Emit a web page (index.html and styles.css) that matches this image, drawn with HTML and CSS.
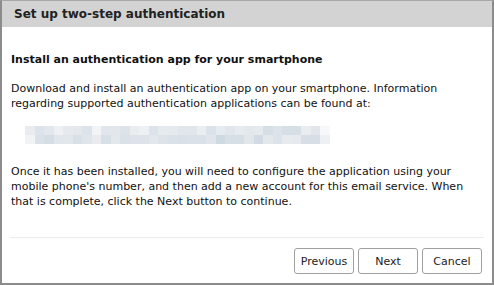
FILE: index.html
```html
<!DOCTYPE html>
<html>
<head>
<meta charset="utf-8">
<link rel="stylesheet" href="styles.css">
</head>
<body>
<div class="dialog">
  <div class="titlebar">Set up two-step authentication</div>
  <div class="content">
    <h2 class="heading">Install an authentication app for your smartphone</h2>
    <p class="para">Download and install an authentication app on your smartphone. Information regarding supported authentication applications can be found at:</p>
    <div class="blur" id="blur"></div>
    <p class="para para-after">Once it has been installed, you will need to configure the application using your mobile phone's number, and then add a new account for this email service. When that is complete, click the Next button to continue.</p>
  </div>
  <div class="footer">
    <button class="btn btn-prev">Previous</button>
    <button class="btn btn-next">Next</button>
    <button class="btn btn-cancel">Cancel</button>
  </div>
</div>
<script>
  var colors = [
    ["#e8ecf0","#dde3ea","#e1e7ed","#eef1f3","#e6eaee","#e4e8ec","#dde3ea","#f3f4f6","#e1e6ec","#e3e7eb","#dde3e9","#e9edf0","#eef1f3","#dde3ea","#e5eaee","#e5eaee","#e1e6eb","#e1e6ec","#ebeef1","#dbe2e9","#e6ebef","#e0e6ec","#e7ebef","#e3e8ec","#e6eaee","#d6dee6","#dde3ea","#d6dee6","#d6dee6","#e9edf0","#e2e6eb","#f6f8f9"],
    ["#f1f3f5","#dbe1e8","#d5dde5","#e1e6ec","#e2e7ec","#d9e0e7","#dfe5ea","#e8ecef","#d7dfe7","#e3e8ed","#dae1e8","#dde3e9","#dde3e9","#e2e7ec","#dde3e9","#dbe1e8","#d9e0e7","#dbe1e8","#dbe1e8","#e0e5eb","#cfd9e2","#d7dfe6","#d7dfe6","#e1e6eb","#d2dbe4","#e3e8ed","#dde3ea","#e7ebee","#e6e9ed","#d7dee6","#d7dee6","#eef1f4"]
  ];
  var el = document.getElementById('blur');
  colors.forEach(function(row){
    row.forEach(function(c){
      var d = document.createElement('span');
      d.className = 'px';
      d.style.background = c;
      el.appendChild(d);
    });
  });
</script>
</body>
</html>
```

FILE: styles.css
```css
html, body {
  margin: 0;
  padding: 0;
  background: #fff;
}
.dialog {
  box-sizing: border-box;
  width: 494px;
  height: 285px;
  border: 2px solid #8c8c8c;
  border-top: 1px solid #a8a8a8;
  background: #fff;
  display: flex;
  flex-direction: column;
  font-family: "DejaVu Sans", "Liberation Sans", sans-serif;
  color: #111;
}
.titlebar {
  height: 26px;
  background: #d3d3d3;
  font-size: 12px;
  font-weight: bold;
  line-height: 26px;
  padding-left: 12px;
  color: #222;
}
.content {
  flex: 1;
  padding: 0 9px;
  font-size: 11px;
}
.heading {
  font-size: 11px;
  font-weight: bold;
  margin: 25px 0 0 0;
  line-height: 15px;
}
.para {
  margin: 14px 0 0 0;
  line-height: 15px;
}
.para-after {
  margin-top: 20px;
}
.blur {
  margin: 15px 0 0 14px;
  width: 305px;
  display: grid;
  grid-template-columns: repeat(32, 1fr);
  grid-auto-rows: 9px;
}
.px {
  display: block;
}
.footer {
  margin: 0 8px;
  border-top: 1px solid #ececec;
  display: flex;
  justify-content: flex-end;
  gap: 4px;
  padding: 10px 2px 9px 0;
}
.btn {
  box-sizing: border-box;
  width: 60px;
  height: 26px;
  background: #fff;
  border: 1px solid #a0a0a0;
  border-radius: 3px;
  font-family: "DejaVu Sans", "Liberation Sans", sans-serif;
  font-size: 11px;
  color: #222;
  padding: 0;
}
```
